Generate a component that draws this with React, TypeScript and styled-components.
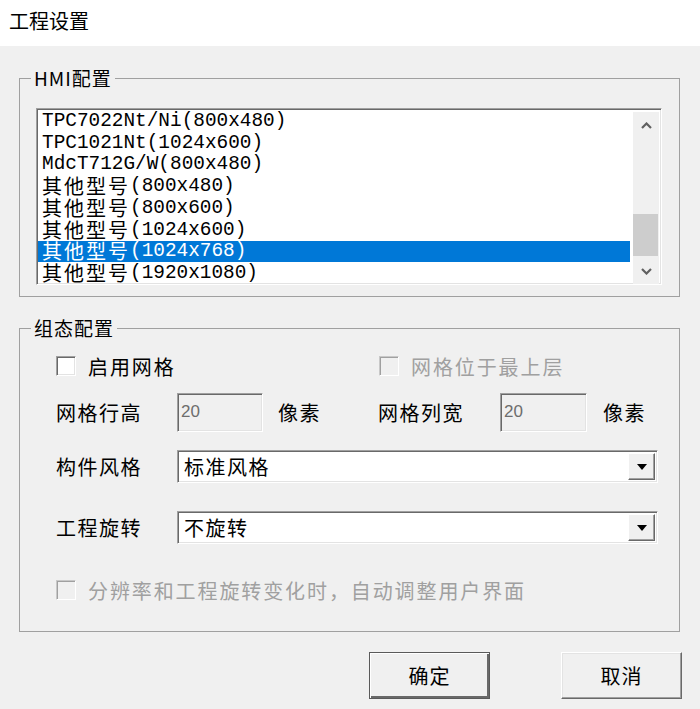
import React from 'react';
import styled, { createGlobalStyle, css } from 'styled-components';

const GlobalStyle = createGlobalStyle`
  html, body {
    margin: 0;
    padding: 0;
    background: #f0f0f0;
  }
  body {
    font-family: "Noto Sans CJK SC", "Liberation Sans", sans-serif;
    color: #000;
  }
`;

const sunken = css`
  border: 1px solid;
  border-color: #a0a0a0 #fff #fff #a0a0a0;
  box-shadow: inset 1px 1px 0 #696969, inset -1px -1px 0 #e3e3e3;
`;

const Window = styled.div`
  width: 700px;
  height: 709px;
  display: flex;
  flex-direction: column;
  background: #f0f0f0;
  overflow: hidden;
`;

const TitleBar = styled.div`
  height: 46px;
  flex: none;
  box-sizing: border-box;
  background: #fff;
  display: flex;
  align-items: center;
  padding: 0 0 6px 9px;
  font-size: 20px;
`;

const Body = styled.div`
  display: flex;
  flex-direction: column;
  padding: 0 20px 0 19px;
`;

const GroupBox = styled.fieldset<{ $mt: number }>`
  margin: ${p => p.$mt}px 0 0;
  padding: 0;
  border: 1px solid #a0a0a0;
  min-inline-size: 0;
`;

const Legend = styled.legend`
  margin-left: 11px;
  padding: 0 3px;
  font-size: 19px;
  line-height: 22px;
  letter-spacing: 1px;
`;

/* ---- list box ---- */

const ListBox = styled.div`
  ${sunken};
  margin: 19px 17px 11px 16px;
  height: 177px;
  box-sizing: border-box;
  display: flex;
  background: #fff;
`;

const ListRows = styled.div`
  flex: 1;
  padding: 1px 1px 0;
  overflow: hidden;
`;

const ListRow = styled.div<{ $selected?: boolean }>`
  height: 21.75px;
  display: flex;
  align-items: center;
  padding-left: 4px;
  white-space: nowrap;
  font-family: "Liberation Mono", monospace;
  font-size: 19.4px;
  line-height: 20px;
  background: ${p => (p.$selected ? '#0078d7' : 'transparent')};
  color: ${p => (p.$selected ? '#fff' : '#000')};
  overflow: hidden;
`;

const Cjk = styled.span`
  font-family: "Noto Sans CJK SC", sans-serif;
  font-size: 20px;
  letter-spacing: 2px;
  line-height: 20px;
`;

const ScrollBar = styled.div`
  width: 26px;
  flex: none;
  margin: 3px 2px 0 2px;
  background: #f0f0f0;
  display: flex;
  flex-direction: column;
`;

const ScrollButton = styled.div`
  height: 26px;
  display: flex;
  align-items: center;
  justify-content: center;
  flex: none;
`;

const ScrollTrack = styled.div`
  flex: 1;
`;

const ScrollThumb = styled.div`
  width: 25px;
  height: 42px;
  background: #cdcdcd;
`;

/* ---- settings group ---- */

const GroupContent = styled.div`
  display: flex;
  flex-direction: column;
  padding: 0 21px 29px 36px;
`;

const Row = styled.div<{ $h: number; $mt: number }>`
  display: flex;
  align-items: center;
  height: ${p => p.$h}px;
  margin-top: ${p => p.$mt}px;
`;

const Half = styled.div<{ $w?: number }>`
  display: flex;
  align-items: center;
  height: 100%;
  width: ${p => (p.$w ? `${p.$w}px` : 'auto')};
  flex: none;
`;

const CheckLabel = styled.label<{ $disabled?: boolean }>`
  display: flex;
  align-items: center;
  font-size: 20px;
  letter-spacing: 1.9px;
  color: ${p => (p.$disabled ? '#a0a0a0' : '#000')};
`;

const CheckBox = styled.span<{ $disabled?: boolean }>`
  ${sunken};
  width: 20px;
  height: 20px;
  box-sizing: border-box;
  flex: none;
  margin-right: 12px;
  background: ${p => (p.$disabled ? '#f0f0f0' : '#fff')};
  ${p =>
    p.$disabled &&
    css`
      border-color: #c8c8c8 #fff #fff #c8c8c8;
      box-shadow: inset 1px 1px 0 #a0a0a0;
    `}
`;

const FieldLabel = styled.span<{ $w: number }>`
  width: ${p => p.$w}px;
  flex: none;
  font-size: 20px;
  letter-spacing: 1.5px;
`;

const NumberBox = styled.div<{ $w: number }>`
  ${sunken};
  width: ${p => p.$w}px;
  height: 39px;
  box-sizing: border-box;
  background: #f0f0f0;
  display: flex;
  align-items: center;
  font-family: "Liberation Sans", sans-serif;
  font-size: 17px;
  color: #6d6d6d;
  padding: 0 0 2px 3px;
`;

const Unit = styled.span<{ $ml: number }>`
  margin-left: ${p => p.$ml}px;
  font-size: 20px;
  letter-spacing: 1.5px;
`;

const Combo = styled.div`
  ${sunken};
  width: 482px;
  height: 100%;
  box-sizing: border-box;
  background: #fff;
  display: flex;
  align-items: center;
  padding: 2px 2px 2px 6px;
`;

const ComboText = styled.span`
  flex: 1;
  font-size: 20px;
  letter-spacing: 1.5px;
`;

const DropButton = styled.div`
  width: 27px;
  height: 100%;
  box-sizing: border-box;
  background: #f0f0f0;
  border: 1px solid;
  border-color: #fff #696969 #696969 #fff;
  box-shadow: inset -1px -1px 0 #a0a0a0;
  display: flex;
  align-items: center;
  justify-content: center;
`;

/* ---- dialog buttons ---- */

const ButtonBar = styled.div`
  display: flex;
  justify-content: flex-end;
  gap: 71px;
  margin: 20px -2px 0 0;
`;

const DialogButton = styled.button<{ $default?: boolean }>`
  width: 121px;
  height: 47px;
  background: #f0f0f0;
  font-family: "Noto Sans CJK SC", sans-serif;
  font-size: 20px;
  letter-spacing: 1px;
  color: #000;
  padding: 0;
  border: 1px solid;
  border-color: #fff #696969 #696969 #fff;
  box-shadow: inset -1px -1px 0 #a0a0a0, inset 1px 1px 0 #e3e3e3;
  ${p =>
    p.$default &&
    css`
      border-color: #5a5a5a;
      box-shadow: inset 1px 1px 0 #fff, inset -2px -2px 0 #696969;
    `}
`;

const Chevron = ({ up }: { up?: boolean }) => (
  <svg width="11" height="7" viewBox="0 0 11 7">
    <path
      d={up ? 'M1 6 L5.5 1.5 L10 6' : 'M1 1 L5.5 5.5 L10 1'}
      fill="none"
      stroke="#606060"
      strokeWidth="2.2"
    />
  </svg>
);

const Triangle = () => (
  <svg width="10" height="6" viewBox="0 0 10 6">
    <polygon points="0,0 10,0 5,6" fill="#000" />
  </svg>
);

const models: Array<{ cjk?: string; text: string }> = [
  { text: 'TPC7022Nt/Ni(800x480)' },
  { text: 'TPC1021Nt(1024x600)' },
  { text: 'MdcT712G/W(800x480)' },
  { cjk: '其他型号', text: '(800x480)' },
  { cjk: '其他型号', text: '(800x600)' },
  { cjk: '其他型号', text: '(1024x600)' },
  { cjk: '其他型号', text: '(1024x768)' },
  { cjk: '其他型号', text: '(1920x1080)' },
];

const selectedIndex = 6;

export default function App() {
  return (
    <Window>
      <GlobalStyle />
      <TitleBar>工程设置</TitleBar>
      <Body>
        <GroupBox $mt={21}>
          <Legend>HMI配置</Legend>
          <ListBox>
            <ListRows>
              {models.map((m, i) => (
                <ListRow key={i} $selected={i === selectedIndex}>
                  {m.cjk && <Cjk>{m.cjk}</Cjk>}
                  {m.text}
                </ListRow>
              ))}
            </ListRows>
            <ScrollBar>
              <ScrollButton>
                <Chevron up />
              </ScrollButton>
              <ScrollTrack>
                <ScrollThumb style={{ marginTop: 76 }} />
              </ScrollTrack>
              <ScrollButton>
                <Chevron />
              </ScrollButton>
            </ScrollBar>
          </ListBox>
        </GroupBox>

        <GroupBox $mt={20}>
          <Legend>组态配置</Legend>
          <GroupContent>
            <Row $h={24} $mt={15}>
              <Half $w={323}>
                <CheckLabel>
                  <CheckBox />
                  启用网格
                </CheckLabel>
              </Half>
              <Half>
                <CheckLabel $disabled>
                  <CheckBox $disabled />
                  网格位于最上层
                </CheckLabel>
              </Half>
            </Row>

            <Row $h={39} $mt={15}>
              <Half $w={322}>
                <FieldLabel $w={121}>网格行高</FieldLabel>
                <NumberBox $w={86}>20</NumberBox>
                <Unit $ml={15}>像素</Unit>
              </Half>
              <Half>
                <FieldLabel $w={122}>网格列宽</FieldLabel>
                <NumberBox $w={87}>20</NumberBox>
                <Unit $ml={16}>像素</Unit>
              </Half>
            </Row>

            <Row $h={33} $mt={18}>
              <FieldLabel $w={121}>构件风格</FieldLabel>
              <Combo>
                <ComboText>标准风格</ComboText>
                <DropButton>
                  <Triangle />
                </DropButton>
              </Combo>
            </Row>

            <Row $h={33} $mt={28}>
              <FieldLabel $w={121}>工程旋转</FieldLabel>
              <Combo>
                <ComboText>不旋转</ComboText>
                <DropButton>
                  <Triangle />
                </DropButton>
              </Combo>
            </Row>

            <Row $h={24} $mt={34}>
              <CheckLabel $disabled>
                <CheckBox $disabled />
                分辨率和工程旋转变化时，自动调整用户界面
              </CheckLabel>
            </Row>
          </GroupContent>
        </GroupBox>

        <ButtonBar>
          <DialogButton $default>确定</DialogButton>
          <DialogButton>取消</DialogButton>
        </ButtonBar>
      </Body>
    </Window>
  );
}
